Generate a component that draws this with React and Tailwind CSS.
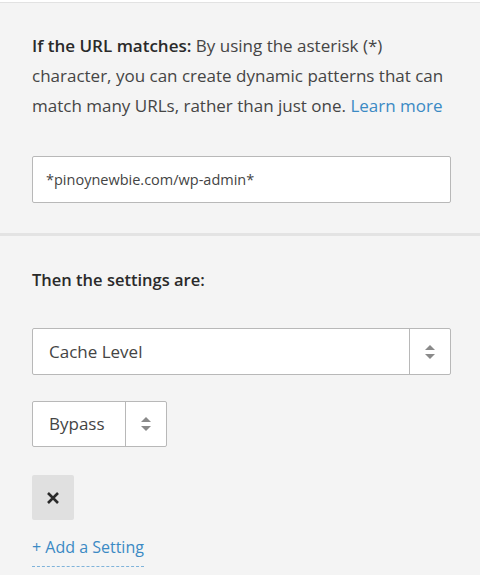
// Page Rule editor: URL match + settings
const Stepper = () => (
  <svg width="12" height="18" viewBox="0 0 12 18" className="text-[#8a8a8a]">
    <path d="M6 2 L11 7 H1 Z" fill="currentColor" />
    <path d="M6 16 L11 11 H1 Z" fill="currentColor" />
  </svg>
);

const App = () => {
  return (
    <div
      className="w-[480px] h-[575px] overflow-hidden bg-[#f4f4f4] text-[#454545]"
      style={{ fontFamily: "'Open Sans', 'Noto Sans', sans-serif" }}
    >
      <div className="h-[3px] bg-white border-b border-[#e2e2e2]" />

      {/* If the URL matches */}
      <div className="pl-8 pr-[29px] pt-[28px] pb-[30px]">
        <p className="text-[17px] leading-[30px] whitespace-nowrap">
          <span className="font-semibold text-[#2a2a2a]">If the URL matches:</span> By using the
          asterisk (*)
          <br />
          character, you can create dynamic patterns that can
          <br />
          match many URLs, rather than just one. <span className="text-[#3b8ac4]">Learn more</span>
        </p>
        <div className="mt-[35px] h-[47px] bg-white border border-[#b8b8b8] rounded-[2px] flex items-center px-[13px] text-[14.5px] text-[#444]">
          *pinoynewbie.com/wp-admin*
        </div>
      </div>

      <div className="h-[3px] bg-[#e3e3e3]" />

      {/* Then the settings are */}
      <div className="px-8 pt-[32px]">
        <div className="text-[16.5px] font-semibold text-[#2a2a2a] leading-[24px]">
          Then the settings are:
        </div>

        <div className="mt-[36px] mr-[-3px] h-[47px] bg-white border border-[#b8b8b8] rounded-[2px] flex">
          <div className="flex-1 flex items-center px-[16px] text-[17px] text-[#444]">
            Cache Level
          </div>
          <div className="w-[41px] border-l border-[#b8b8b8] flex items-center justify-center">
            <Stepper />
          </div>
        </div>

        <div className="mt-[26px] w-[135px] h-[46px] bg-white border border-[#b8b8b8] rounded-[2px] flex">
          <div className="flex-1 flex items-center px-[16px] text-[17px] text-[#444]">
            Bypass
          </div>
          <div className="w-[41px] border-l border-[#b8b8b8] flex items-center justify-center">
            <Stepper />
          </div>
        </div>

        <button className="mt-[28px] w-[42px] h-[45px] bg-[#e0e0e0] rounded-[2px] flex items-center justify-center">
          <svg width="14" height="14" viewBox="0 0 14 14">
            <path d="M2 2 L12 12 M12 2 L2 12" stroke="#2a2a2a" strokeWidth="2.6" />
          </svg>
        </button>

        <div className="mt-[16px] inline-block text-[16px] text-[#3b8ac4] leading-[22px] pb-[8px] border-b border-dashed border-[#7fb3da]">
          + Add a Setting
        </div>
      </div>
    </div>
  );
};

export default App;
